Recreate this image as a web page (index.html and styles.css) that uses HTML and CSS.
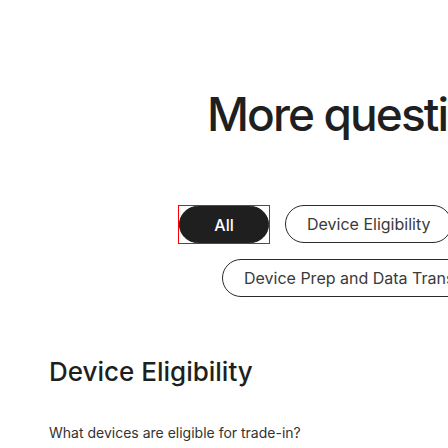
FILE: index.html
```html
<!DOCTYPE html>
<html>
<head>
<meta charset="utf-8">
<link rel="stylesheet" href="styles.css">
</head>
<body>
<div class="page">
  <section class="hero">
    <h1 class="hero-title">More questions?</h1>
  </section>
  <nav class="chips">
    <div class="chip-row chip-row-1">
      <span class="chip-focus"><button class="chip chip-active">All</button></span>
      <button class="chip">Device Eligibility</button>
    </div>
    <div class="chip-row chip-row-2">
      <button class="chip">Device Prep and Data Transfer</button>
    </div>
  </nav>
  <section class="faq">
    <h2 class="faq-title">Device Eligibility</h2>
    <p class="faq-question">What devices are eligible for trade-in?</p>
  </section>
</div>
</body>
</html>
```
FILE: styles.css
```css
html, body {
  margin: 0;
  padding: 0;
  background: #ffffff;
  overflow: hidden;
}
body {
  font-family: Inter, "Noto Sans", sans-serif;
  color: #1f1f1f;
}
.page {
  width: 776px;
}
.hero {
  padding-top: 86px;
  padding-left: 207px;
}
.hero-title {
  margin: 0;
  font-size: 46px;
  font-weight: 500;
  line-height: 56px;
  color: #1f1f1f;
  letter-spacing: -1.9px;
  white-space: nowrap;
}
.chips {
  margin-top: 63px;
  display: flex;
  flex-direction: column;
  gap: 15px;
}
.chip-row {
  display: flex;
  align-items: flex-start;
  gap: 15px;
}
.chip-row-1 { padding-left: 178px; }
.chip-row-2 { padding-left: 222px; }
.chip {
  height: 38px;
  box-sizing: border-box;
  padding: 0 21px;
  border: 1px solid #2a2a2a;
  border-radius: 19px;
  background: #ffffff;
  font-family: Inter, "Noto Sans", sans-serif;
  font-size: 16px;
  color: #3a3a3a;
  white-space: nowrap;
  flex: none;
}
.chip-focus {
  display: flex;
  border: 1px solid #ff0000;
  flex: none;
}
.chip-active {
  width: 90px;
  height: 37px;
  padding: 0;
  background: #1f1f20;
  border-color: #1f1f20;
  color: #ffffff;
  font-weight: 500;
}
.faq {
  padding-left: 49px;
  padding-top: 58px;
}
.faq-title {
  margin: 0;
  font-size: 26px;
  font-weight: 500;
  line-height: 34px;
  color: #1f1f1f;
}
.faq-question {
  margin: 0;
  padding-top: 34px;
  font-size: 14px;
  line-height: 20px;
  color: #333333;
}
```
